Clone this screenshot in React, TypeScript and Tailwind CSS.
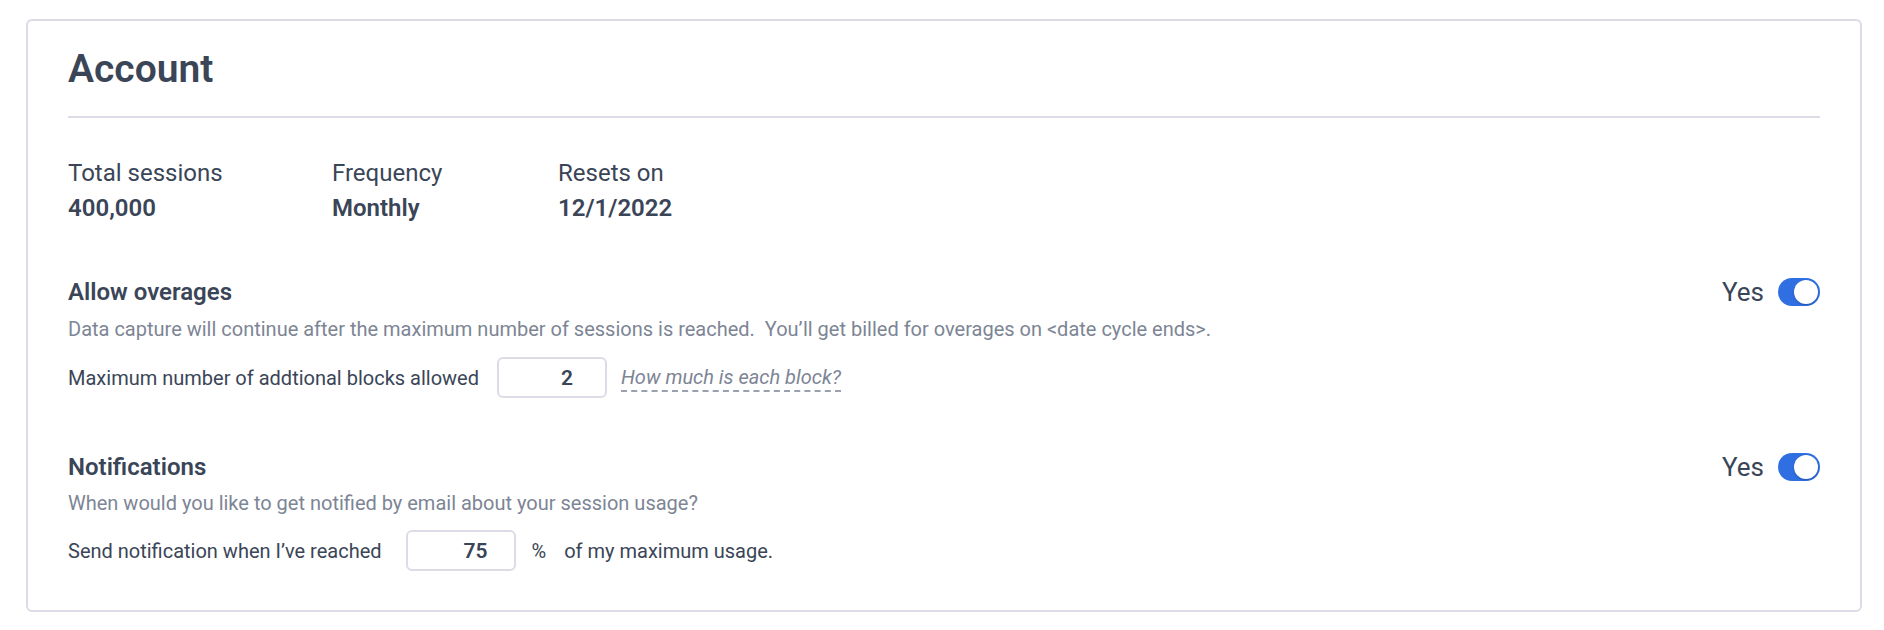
import React, { useState } from "react";

function Toggle({ on, onChange }: { on: boolean; onChange: (v: boolean) => void }) {
  return (
    <button
      type="button"
      onClick={() => onChange(!on)}
      className={`flex h-[28px] w-[42px] items-center rounded-full p-[2px] ${on ? "justify-end bg-[#2f6fe2]" : "justify-start bg-[#c9ccd6]"}`}
    >
      <span className="h-[24px] w-[24px] rounded-full bg-white shadow-[0_1px_2px_rgba(0,0,0,0.25)]" />
    </button>
  );
}

function Stat({ label, value }: { label: string; value: string }) {
  return (
    <div>
      <div className="text-[24px] leading-[35px]">{label}</div>
      <div className="text-[24px] font-semibold leading-[35px]">{value}</div>
    </div>
  );
}

function SectionHead({ title, on, onChange }: { title: string; on: boolean; onChange: (v: boolean) => void }) {
  return (
    <div className="flex items-center justify-between">
      <h2 className="text-[24px] font-semibold leading-[30px]">{title}</h2>
      <div className="flex items-center gap-[14px]">
        <span className="text-[26px] leading-[30px]">Yes</span>
        <Toggle on={on} onChange={onChange} />
      </div>
    </div>
  );
}

export default function App() {
  const [overages, setOverages] = useState(true);
  const [notify, setNotify] = useState(true);
  const [blocks, setBlocks] = useState("2");
  const [pct, setPct] = useState("75");

  return (
    <div className="min-h-[630px] bg-white pl-[26px] pr-[22px] pt-[19px] font-['Roboto',sans-serif] text-[#3a4557]">
      <div className="h-[593px] rounded-[6px] border-2 border-[#dcdce6] px-[40px]">
        <h1 className="pt-[26px] text-[39px] font-semibold leading-[44px]">Account</h1>
        <div className="mt-[25px] h-[2px] bg-[#dcdce6]" />

        <div className="mt-[38px] flex">
          <div className="w-[264px]">
            <Stat label="Total sessions" value="400,000" />
          </div>
          <div className="w-[226px]">
            <Stat label="Frequency" value="Monthly" />
          </div>
          <Stat label="Resets on" value="12/1/2022" />
        </div>

        <section className="mt-[51px]">
          <SectionHead title="Allow overages" on={overages} onChange={setOverages} />
          <p className="mt-[8px] text-[20px] leading-[28px] text-[#7d8595]">
            Data capture will continue after the maximum number of sessions is reached.&nbsp; You’ll get billed for overages on &lt;date cycle ends&gt;.
          </p>
          <div className="mt-[14px] flex items-center text-[20px]">
            <span>Maximum number of addtional blocks allowed</span>
            <input
              value={blocks}
              onChange={(e) => setBlocks(e.target.value)}
              className="ml-[18px] h-[41px] w-[110px] rounded-[6px] border-2 border-[#dcdce6] pl-[30px] text-center text-[21px] font-semibold outline-none"
            />
            <span className="ml-[14px] border-b-2 border-dashed border-[#9aa0ad] italic leading-[26px] text-[#7d8595]">
              How much is each block?
            </span>
          </div>
        </section>

        <section className="mt-[54px]">
          <SectionHead title="Notifications" on={notify} onChange={setNotify} />
          <p className="mt-[7px] text-[20px] leading-[28px] text-[#7d8595]">
            When would you like to get notified by email about your session usage?
          </p>
          <div className="mt-[13px] flex items-center text-[20px]">
            <span>Send notification when I’ve reached</span>
            <input
              value={pct}
              onChange={(e) => setPct(e.target.value)}
              className="ml-[24px] h-[41px] w-[110px] rounded-[6px] border-2 border-[#dcdce6] pl-[30px] text-center text-[21px] font-semibold outline-none"
            />
            <span className="ml-[16px]">%</span>
            <span className="ml-[18px]">of my maximum usage.</span>
          </div>
        </section>
      </div>
    </div>
  );
}
